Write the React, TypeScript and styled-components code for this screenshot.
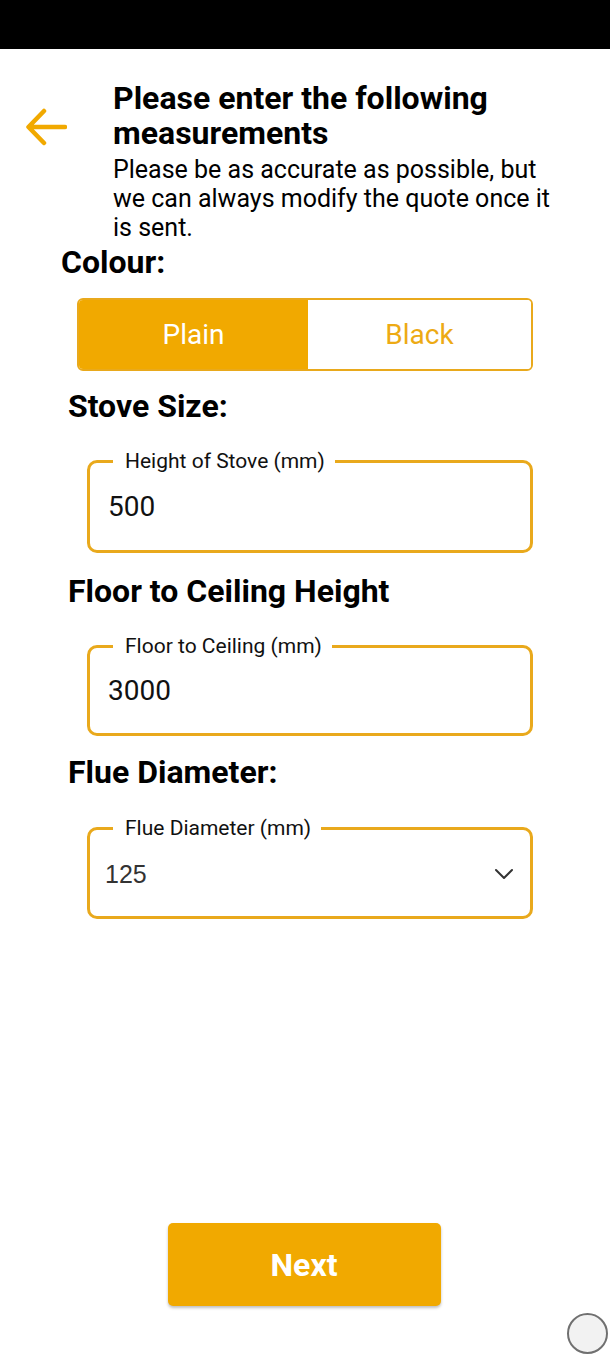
import React from "react";
import styled, { createGlobalStyle } from "styled-components";

const GlobalStyle = createGlobalStyle`
  html, body {
    margin: 0;
    padding: 0;
    background: #ffffff;
  }
  body {
    font-family: Roboto, "Noto Sans", "Liberation Sans", sans-serif;
    color: #000;
  }
  * { box-sizing: border-box; }
`;

const ACCENT = "#F1A900";
const BORDER = "#E9A91C";

const Page = styled.div`
  width: 610px;
  height: 1355px;
  display: flex;
  flex-direction: column;
  position: relative;
  overflow: hidden;
  background: #fff;
`;

const StatusBar = styled.div`
  height: 49px;
  background: #000;
  flex: none;
`;

const Header = styled.header`
  display: grid;
  grid-template-columns: 113px 1fr;
  padding-top: 32px;
  padding-right: 50px;
`;

const BackButton = styled.button`
  border: none;
  background: none;
  padding: 0;
  margin: 24px 0 0 24px;
  width: 44px;
  height: 44px;
  display: flex;
  align-items: center;
  justify-content: center;
  align-self: start;
  cursor: pointer;
`;

const HeaderText = styled.div`
  display: flex;
  flex-direction: column;
`;

const Title = styled.h1`
  margin: 0;
  font-size: 32px;
  line-height: 35px;
  font-weight: 700;
  color: #000;
`;

const Subtitle = styled.p`
  margin: 4px 0 0;
  font-size: 25px;
  line-height: 29px;
  font-weight: 400;
  color: #000;
`;

const SectionTitle = styled.h2<{ $indent: number; $top: number }>`
  margin: ${(p) => p.$top}px 0 0 ${(p) => p.$indent}px;
  font-size: 32px;
  line-height: 36px;
  font-weight: 700;
  color: #000;
`;

const Segmented = styled.div`
  margin: 18px 0 0 77px;
  width: 456px;
  height: 73px;
  display: grid;
  grid-template-columns: 229px 1fr;
  border: 2px solid ${BORDER};
  border-radius: 6px;
  overflow: hidden;
`;

const SegmentButton = styled.button<{ $active: boolean }>`
  border: none;
  margin: 0;
  padding: 0;
  font-family: inherit;
  font-size: 28px;
  font-weight: 400;
  background: ${(p) => (p.$active ? ACCENT : "#fff")};
  color: ${(p) => (p.$active ? "#fff" : "#EDAA14")};
  cursor: pointer;
`;

const Field = styled.div<{ $top: number; $height: number }>`
  position: relative;
  margin: ${(p) => p.$top}px 0 0 87px;
  width: 446px;
  height: ${(p) => p.$height}px;
  border: 3.5px solid ${BORDER};
  border-radius: 10px;
  display: flex;
  align-items: center;
  padding: 0 14px 0 18px;
`;

const FieldLabel = styled.label`
  position: absolute;
  top: -16px;
  left: 23px;
  padding: 0 10px 0 12px;
  background: #fff;
  font-size: 21px;
  line-height: 28px;
  color: #111;
`;

const ValueInput = styled.input`
  border: none;
  outline: none;
  background: transparent;
  width: 100%;
  padding: 0;
  margin-top: 0;
  font-family: inherit;
  font-size: 28px;
  color: #111;
`;

const SelectValue = styled.div`
  flex: 1;
  font-family: "Liberation Sans", Arial, sans-serif;
  font-size: 25px;
  color: #333;
  margin-left: -3px;
  margin-top: 2px;
`;

const Chevron = styled.svg`
  width: 20px;
  height: 12px;
  margin-right: 2px;
  margin-top: 2px;
`;

const Spacer = styled.div`
  flex: 1;
`;

const Footer = styled.div`
  display: flex;
  justify-content: center;
  padding-bottom: 49px;
  padding-right: 2px;
`;

const NextButton = styled.button`
  width: 273px;
  height: 83px;
  border: none;
  border-radius: 5px;
  background: ${ACCENT};
  color: #fff;
  font-family: inherit;
  font-size: 32px;
  font-weight: 700;
  box-shadow: 0 2px 3px rgba(0, 0, 0, 0.25);
  cursor: pointer;
`;

const HomeDot = styled.div`
  position: absolute;
  right: 2px;
  bottom: 1px;
  width: 41px;
  height: 41px;
  border-radius: 50%;
  border: 2px solid #707070;
  background: #f2f2f2;
`;

export default function App() {
  const [colour, setColour] = React.useState<"Plain" | "Black">("Plain");
  return (
    <Page>
      <GlobalStyle />
      <StatusBar />
      <Header>
        <BackButton aria-label="Back">
          <svg width="42" height="42" viewBox="0 0 42 42" fill="none">
            <path
              d="M40 21H4M19 5L3.5 21L19 37"
              stroke={ACCENT}
              strokeWidth="4.5"
              strokeLinecap="round"
              strokeLinejoin="round"
            />
          </svg>
        </BackButton>
        <HeaderText>
          <Title>Please enter the following measurements</Title>
          <Subtitle>
            Please be as accurate as possible, but we can always modify the quote once it is sent.
          </Subtitle>
        </HeaderText>
      </Header>

      <SectionTitle $indent={61} $top={2}>Colour:</SectionTitle>
      <Segmented>
        <SegmentButton $active={colour === "Plain"} onClick={() => setColour("Plain")}>
          Plain
        </SegmentButton>
        <SegmentButton $active={colour === "Black"} onClick={() => setColour("Black")}>
          Black
        </SegmentButton>
      </Segmented>

      <SectionTitle $indent={68} $top={17}>Stove Size:</SectionTitle>
      <Field $top={36} $height={93}>
        <FieldLabel>Height of Stove (mm)</FieldLabel>
        <ValueInput defaultValue="500" />
      </Field>

      <SectionTitle $indent={68} $top={20}>Floor to Ceiling Height</SectionTitle>
      <Field $top={36} $height={91}>
        <FieldLabel>Floor to Ceiling (mm)</FieldLabel>
        <ValueInput defaultValue="3000" />
      </Field>

      <SectionTitle $indent={68} $top={18}>Flue Diameter:</SectionTitle>
      <Field $top={37} $height={92}>
        <FieldLabel>Flue Diameter (mm)</FieldLabel>
        <SelectValue>125</SelectValue>
        <Chevron viewBox="0 0 20 12" fill="none">
          <path d="M2 2L10 10L18 2" stroke="#333" strokeWidth="2" strokeLinecap="round" strokeLinejoin="round" />
        </Chevron>
      </Field>

      <Spacer />
      <Footer>
        <NextButton>Next</NextButton>
      </Footer>
      <HomeDot />
    </Page>
  );
}
